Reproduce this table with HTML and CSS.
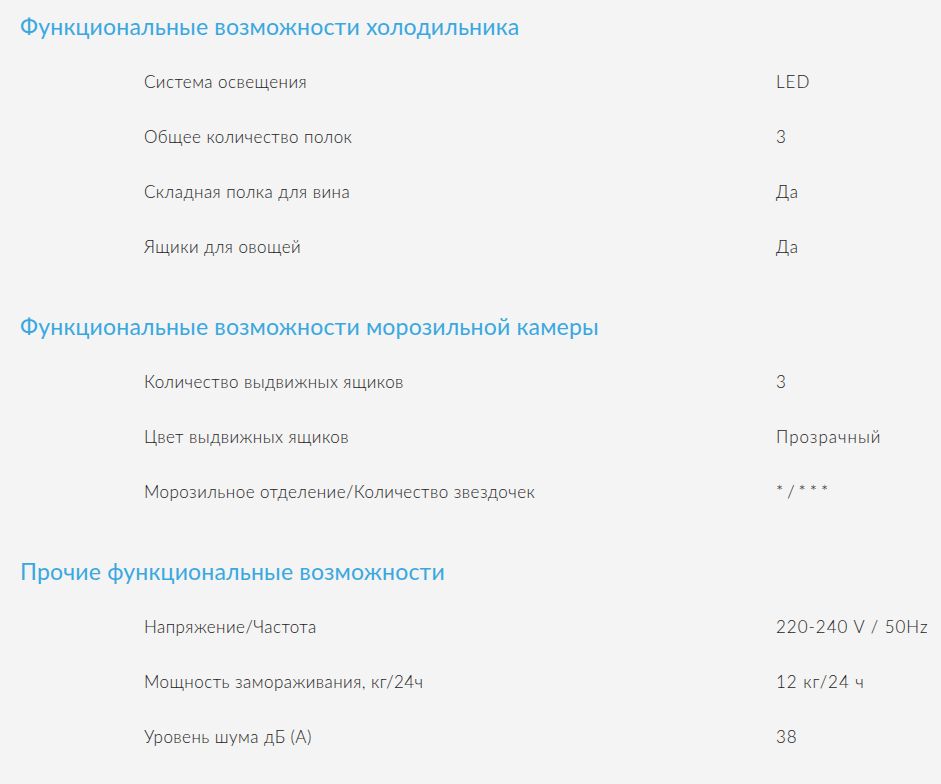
FILE: index.html
```html
<!DOCTYPE html>
<html lang="ru">
<head>
<meta charset="utf-8">
<title>Характеристики</title>
<link rel="stylesheet" href="styles.css">
</head>
<body>
<main class="specs">
  <section class="group">
    <h2 class="group-title">Функциональные возможности холодильника</h2>
    <div class="row"><span class="label">Система освещения</span><span class="value">LED</span></div>
    <div class="row"><span class="label">Общее количество полок</span><span class="value">3</span></div>
    <div class="row"><span class="label">Складная полка для вина</span><span class="value">Да</span></div>
    <div class="row"><span class="label">Ящики для овощей</span><span class="value">Да</span></div>
  </section>
  <section class="group">
    <h2 class="group-title">Функциональные возможности морозильной камеры</h2>
    <div class="row"><span class="label">Количество выдвижных ящиков</span><span class="value">3</span></div>
    <div class="row"><span class="label">Цвет выдвижных ящиков</span><span class="value">Прозрачный</span></div>
    <div class="row"><span class="label">Морозильное отделение/Количество звездочек</span><span class="value value-stars">*/***</span></div>
  </section>
  <section class="group">
    <h2 class="group-title">Прочие функциональные возможности</h2>
    <div class="row"><span class="label">Напряжение/Частота</span><span class="value">220-240 V / 50Hz</span></div>
    <div class="row"><span class="label">Мощность замораживания, кг/24ч</span><span class="value">12 кг/24 ч</span></div>
    <div class="row"><span class="label">Уровень шума дБ (A)</span><span class="value">38</span></div>
  </section>
</main>
</body>
</html>
```

FILE: styles.css
```css
html, body {
  margin: 0;
  padding: 0;
  background: #f4f4f4;
}
body {
  font-family: Lato, "Noto Sans", sans-serif;
  font-weight: 300;
  color: #1c1c1c;
}
.specs {
  padding-top: 11px;
}
.group + .group {
  margin-top: 37px;
}
.group-title {
  margin: 0 0 13px 0;
  padding-left: 20px;
  font-size: 23px;
  line-height: 30px;
  font-weight: 400;
  letter-spacing: 0.2px;
  color: #3aa8e0;
  white-space: nowrap;
}
.row {
  display: grid;
  grid-template-columns: 632px 1fr;
  height: 55px;
  align-items: center;
  padding-left: 144px;
  font-size: 17px;
  letter-spacing: 0.45px;
  white-space: nowrap;
}
.value {
  letter-spacing: 1px;
}
.value-stars {
  letter-spacing: 4px;
}
```
